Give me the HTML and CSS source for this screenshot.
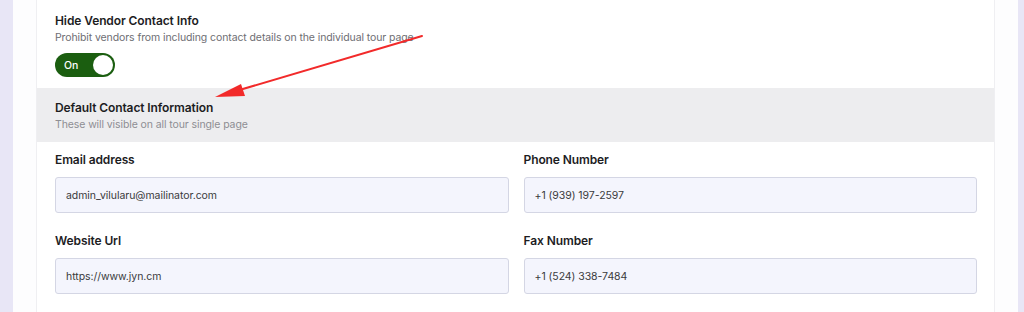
FILE: index.html
```html
<!DOCTYPE html>
<html lang="en">
<head>
<meta charset="utf-8">
<title>Contact settings</title>
<link rel="stylesheet" href="styles.css">
</head>
<body>
<div class="page">
  <div class="strip"></div>
  <main class="main">
    <section class="card">
      <div class="setting">
        <h3 class="setting-title">Hide Vendor Contact Info</h3>
        <p class="setting-desc">Prohibit vendors from including contact details on the individual tour page</p>
        <button class="toggle" type="button"><span class="toggle-label">On</span><span class="toggle-knob"></span></button>
      </div>
      <div class="group-head">
        <h3 class="group-title">Default Contact Information</h3>
        <p class="group-desc">These will visible on all tour single page</p>
      </div>
      <div class="fields">
        <label class="field">
          <span class="field-label">Email address</span>
          <input class="field-input" type="text" value="admin_vilularu@mailinator.com">
        </label>
        <label class="field">
          <span class="field-label">Phone Number</span>
          <input class="field-input" type="text" value="+1 (939) 197-2597">
        </label>
        <label class="field">
          <span class="field-label">Website Url</span>
          <input class="field-input" type="text" value="https://www.jyn.cm">
        </label>
        <label class="field">
          <span class="field-label">Fax Number</span>
          <input class="field-input" type="text" value="+1 (524) 338-7484">
        </label>
      </div>
    </section>
  </main>
  <div class="strip strip-right"></div>
  <svg class="arrow" width="1024" height="312" viewBox="0 0 1024 312" aria-hidden="true">
    <line x1="422" y1="36" x2="236" y2="91" stroke="#f22a2a" stroke-width="2" stroke-linecap="round"/>
    <polygon points="215,97 241,84 245,96" fill="#f22a2a"/>
  </svg>
</div>
</body>
</html>
```

FILE: styles.css
```css
* { box-sizing: border-box; }
html, body { margin: 0; padding: 0; }
body {
  background: #fdfdfe;
  font-family: Inter, "Noto Sans", "Liberation Sans", sans-serif;
  color: #1d1d1f;
  width: 1024px;
  height: 312px;
  overflow: hidden;
}
.page {
  position: relative;
  display: flex;
  height: 312px;
}
.strip {
  width: 13px;
  flex: none;
  background: #e8e6f6;
}
.strip-right { width: 6px; }
.main {
  flex: 1;
  padding: 0 23px 0 23px;
}
.card {
  width: 959px;
  height: 312px;
  background: #fff;
  border-left: 1px solid #efeff2;
  border-right: 1px solid #efeff2;
}
.setting {
  padding: 12px 18px 11px;
}
.setting-title, .group-title {
  margin: 0;
  font-size: 12px;
  line-height: 18px;
  font-weight: 600;
  letter-spacing: -0.1px;
}
.setting-desc {
  margin: 0;
  font-size: 10.5px;
  line-height: 16px;
  letter-spacing: -0.1px;
  color: #6e6e73;
}
.toggle {
  margin-top: 7px;
  display: flex;
  align-items: center;
  justify-content: space-between;
  width: 60px;
  height: 24px;
  padding: 0 2px 0 9px;
  border: 0;
  border-radius: 12px;
  background: #1b5e10;
  font-family: inherit;
}
.toggle-label {
  color: #fff;
  font-size: 10.5px;
  font-weight: 500;
}
.toggle-knob {
  width: 20px;
  height: 20px;
  border-radius: 50%;
  background: #fff;
}
.group-head {
  background: #ededef;
  padding: 11px 18px 9px;
}
.group-desc {
  margin: 0;
  font-size: 10.5px;
  line-height: 16px;
  letter-spacing: -0.1px;
  color: #8e8e93;
}
.fields {
  display: grid;
  grid-template-columns: 1fr 1fr;
  column-gap: 15px;
  row-gap: 19px;
  padding: 9px 17px 0 18px;
}
.field {
  display: flex;
  flex-direction: column;
}
.field-label {
  font-size: 12px;
  line-height: 18px;
  font-weight: 600;
  letter-spacing: -0.1px;
  margin-bottom: 8px;
}
.field-input {
  height: 36px;
  width: 100%;
  border: 1px solid #d4d6e4;
  border-radius: 3px;
  background: #f4f5fd;
  padding: 0 10px;
  font-family: inherit;
  font-size: 10.5px;
  letter-spacing: -0.05px;
  color: #3a3a3c;
}
.arrow {
  position: absolute;
  left: 0;
  top: 0;
  pointer-events: none;
}
```
